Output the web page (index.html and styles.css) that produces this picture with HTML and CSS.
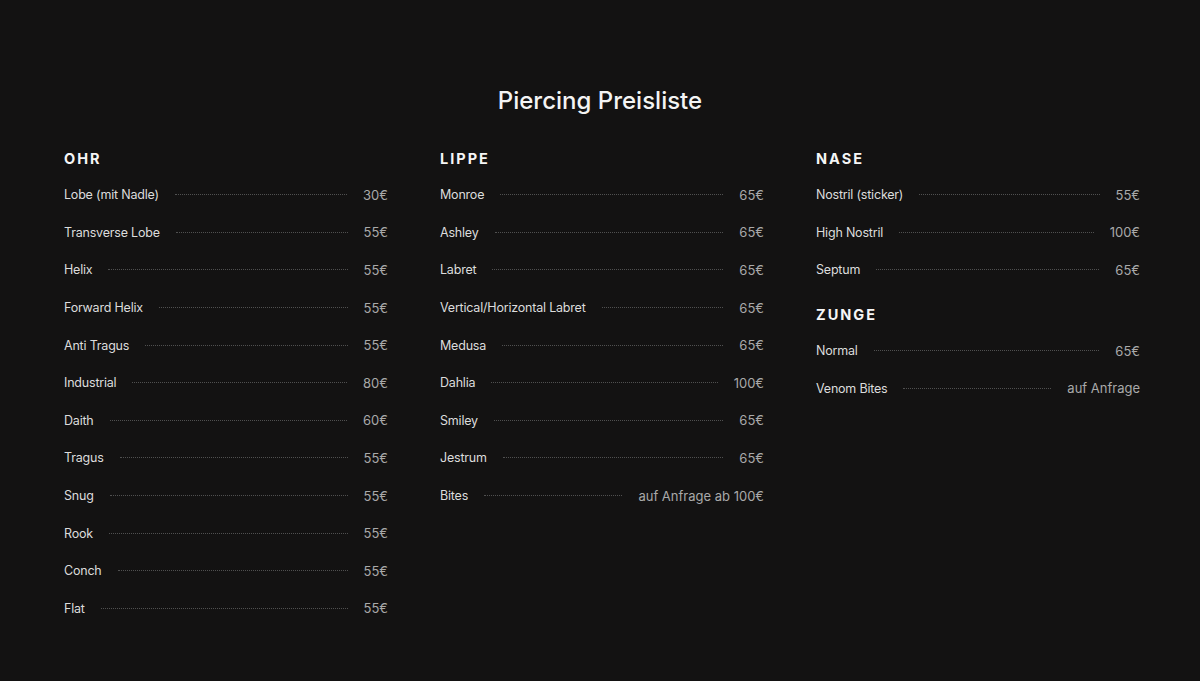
FILE: index.html
```html
<!DOCTYPE html>
<html>

<head>
    <title>Piercing Preisliste</title>
    <link rel="stylesheet" href="styles.css">
</head>

<body>
    <h1 class="title">Piercing Preisliste</h1>

    <div class="columns">
        <section class="group">
            <h3>OHR</h3>
            <div class="row"><span class="name">Lobe (mit Nadle)</span><span class="dots"></span><span class="price">30€</span></div>
            <div class="row"><span class="name">Transverse Lobe</span><span class="dots"></span><span class="price">55€</span></div>
            <div class="row"><span class="name">Helix</span><span class="dots"></span><span class="price">55€</span></div>
            <div class="row"><span class="name">Forward Helix</span><span class="dots"></span><span class="price">55€</span></div>
            <div class="row"><span class="name">Anti Tragus</span><span class="dots"></span><span class="price">55€</span></div>
            <div class="row"><span class="name">Industrial</span><span class="dots"></span><span class="price">80€</span></div>
            <div class="row"><span class="name">Daith</span><span class="dots"></span><span class="price">60€</span></div>
            <div class="row"><span class="name">Tragus</span><span class="dots"></span><span class="price">55€</span></div>
            <div class="row"><span class="name">Snug</span><span class="dots"></span><span class="price">55€</span></div>
            <div class="row"><span class="name">Rook</span><span class="dots"></span><span class="price">55€</span></div>
            <div class="row"><span class="name">Conch</span><span class="dots"></span><span class="price">55€</span></div>
            <div class="row"><span class="name">Flat</span><span class="dots"></span><span class="price">55€</span></div>
        </section>

        <section class="group">
            <h3>LIPPE</h3>
            <div class="row"><span class="name">Monroe</span><span class="dots"></span><span class="price">65€</span></div>
            <div class="row"><span class="name">Ashley</span><span class="dots"></span><span class="price">65€</span></div>
            <div class="row"><span class="name">Labret</span><span class="dots"></span><span class="price">65€</span></div>
            <div class="row"><span class="name">Vertical/Horizontal Labret</span><span class="dots"></span><span class="price">65€</span></div>
            <div class="row"><span class="name">Medusa</span><span class="dots"></span><span class="price">65€</span></div>
            <div class="row"><span class="name">Dahlia</span><span class="dots"></span><span class="price">100€</span></div>
            <div class="row"><span class="name">Smiley</span><span class="dots"></span><span class="price">65€</span></div>
            <div class="row"><span class="name">Jestrum</span><span class="dots"></span><span class="price">65€</span></div>
            <div class="row"><span class="name">Bites</span><span class="dots"></span><span class="price">auf Anfrage ab 100€</span></div>
        </section>

        <section class="group">
            <h3>NASE</h3>
            <div class="row"><span class="name">Nostril (sticker)</span><span class="dots"></span><span class="price">55€</span></div>
            <div class="row"><span class="name">High Nostril</span><span class="dots"></span><span class="price">100€</span></div>
            <div class="row"><span class="name">Septum</span><span class="dots"></span><span class="price">65€</span></div>

            <h3 class="next">ZUNGE</h3>
            <div class="row"><span class="name">Normal</span><span class="dots"></span><span class="price">65€</span></div>
            <div class="row"><span class="name">Venom Bites</span><span class="dots"></span><span class="price">auf Anfrage</span></div>
        </section>
    </div>
</body>

</html>
```

FILE: styles.css
```css
/* page */
html,
body {
    margin: 0;
    padding: 0;
    height: 100%;
}

body {
    background-color: #131212;
    color: #e6e6e6;
    font-family: "Inter", "Noto Sans", sans-serif;
}

.title {
    margin: 86px 0 33px;
    font-size: 24px;
    line-height: 30px;
    font-weight: 500;
    text-align: center;
    color: #f4f4f4;
}

.columns {
    display: grid;
    grid-template-columns: repeat(3, 324px);
    column-gap: 52px;
    padding-left: 64px;
}

.group h3 {
    margin: 0 0 7px;
    font-size: 14.5px;
    line-height: 20px;
    font-weight: 700;
    letter-spacing: 2px;
    color: #f6f6f6;
}

.group h3.next {
    margin-top: 16px;
}

.row {
    display: flex;
    align-items: center;
    height: 37.6px;
    font-size: 12.5px;
    letter-spacing: -0.2px;
}

.name {
    color: #dcdcdc;
}

.dots {
    flex: 1;
    margin: 0 16px;
    border-bottom: 1px dotted #505050;
}

.price {
    font-size: 13px;
    letter-spacing: 0;
    color: #a9a9a9;
}
```
